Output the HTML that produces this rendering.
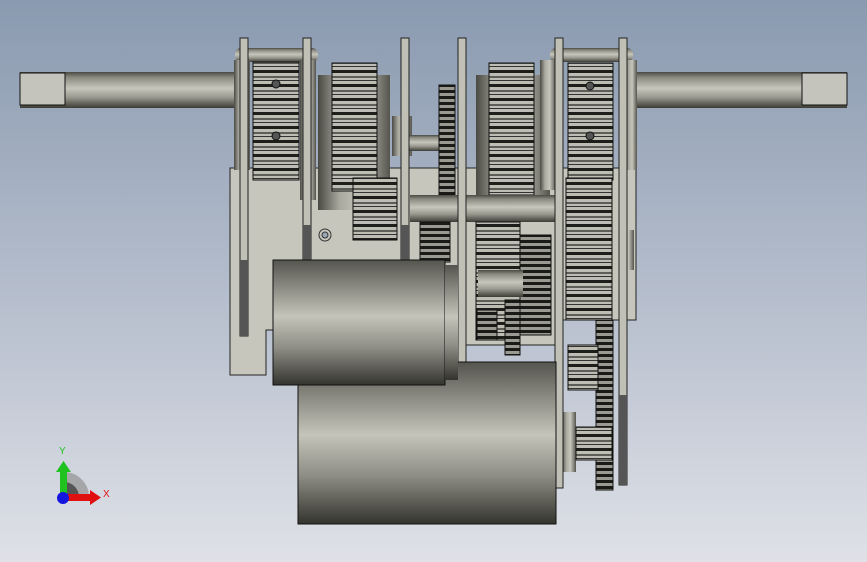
<!DOCTYPE html>
<html><head><meta charset="utf-8"><style>
html,body{margin:0;padding:0;width:867px;height:562px;overflow:hidden}
svg{display:block}
</style></head><body>
<svg width="867" height="562" viewBox="0 0 867 562" xmlns="http://www.w3.org/2000/svg">
<defs>
<linearGradient id="bg" x1="0" y1="0" x2="0" y2="1">
<stop offset="0" stop-color="#8a9ab0"/><stop offset="0.5" stop-color="#b3bccb"/><stop offset="1" stop-color="#dfe1e7"/></linearGradient>
<linearGradient id="cyl" x1="0" y1="0" x2="0" y2="1">
<stop offset="0" stop-color="#4a4a44"/><stop offset="0.15" stop-color="#8a8a80"/><stop offset="0.45" stop-color="#c6c6bc"/><stop offset="0.7" stop-color="#9a9a90"/><stop offset="1" stop-color="#3c3c36"/></linearGradient>
<linearGradient id="cylh" x1="0" y1="0" x2="1" y2="0">
<stop offset="0" stop-color="#4a4a44"/><stop offset="0.3" stop-color="#a8a89e"/><stop offset="0.6" stop-color="#c6c6bc"/><stop offset="1" stop-color="#55554e"/></linearGradient>
<linearGradient id="mot" x1="0" y1="0" x2="0" y2="1">
<stop offset="0" stop-color="#55554f"/><stop offset="0.45" stop-color="#c4c4ba"/><stop offset="0.7" stop-color="#8e8e86"/><stop offset="1" stop-color="#34342e"/></linearGradient>
<pattern id="teeth" width="10" height="14" patternUnits="userSpaceOnUse">
<rect width="10" height="14" fill="#bdbdb3"/><rect y="0" width="10" height="3" fill="#1e1e1a"/><rect y="6" width="10" height="2" fill="#5e5e58"/><rect y="10" width="10" height="1" fill="#333"/></pattern>
<pattern id="teeth2" width="10" height="6" patternUnits="userSpaceOnUse">
<rect width="10" height="6" fill="#9a9a92"/><rect y="0" width="10" height="3" fill="#1a1a16"/></pattern>
</defs>
<rect width="867" height="562" fill="url(#bg)"/>

<rect x="20" y="72" width="225" height="36" fill="url(#cyl)"/>
<rect x="20" y="73" width="45" height="32" fill="#c4c4bc" stroke="#111" stroke-width="1"/>
<rect x="625" y="72" width="222" height="36" fill="url(#cyl)"/>
<rect x="802" y="73" width="45" height="32" fill="#c4c4bc" stroke="#111" stroke-width="1"/>

<path d="M230 168 H636 V320 H560 V345 H460 V330 H266 V375 H230 Z" fill="#c6c6bc" stroke="#222" stroke-width="1"/>

<rect x="235" y="48" width="83" height="14" rx="6" fill="url(#cyl)"/>
<rect x="550" y="48" width="83" height="14" rx="6" fill="url(#cyl)"/>

<rect x="234" y="60" width="16" height="110" fill="url(#cylh)"/>
<rect x="300" y="60" width="16" height="140" fill="url(#cylh)"/>
<rect x="253" y="62" width="46" height="118" fill="url(#teeth)" stroke="#111"/>
<circle cx="276" cy="84" r="4" fill="#555" stroke="#111"/>
<circle cx="276" cy="136" r="4" fill="#555" stroke="#111"/>
<rect x="240" y="38" width="8" height="298" fill="#c0c0b6" stroke="#222"/>
<rect x="240" y="260" width="8" height="76" fill="#555"/>
<rect x="303" y="38" width="8" height="222" fill="#c0c0b6" stroke="#222"/>
<rect x="303" y="225" width="8" height="35" fill="#555"/>

<rect x="318" y="75" width="72" height="135" fill="url(#cylh)"/>
<rect x="332" y="63" width="45" height="128" fill="url(#teeth)" stroke="#111"/>
<rect x="353" y="178" width="44" height="62" fill="url(#teeth)" stroke="#111"/>
<circle cx="325" cy="235" r="6" fill="none" stroke="#333"/><circle cx="325" cy="235" r="3" fill="#9aa6b8" stroke="#333"/>

<rect x="392" y="116" width="20" height="40" fill="url(#cylh)"/>
<rect x="409" y="135" width="32" height="16" fill="url(#cyl)"/>
<rect x="439" y="85" width="16" height="110" fill="url(#teeth2)" stroke="#111"/>
<rect x="401" y="38" width="8" height="222" fill="#c0c0b6" stroke="#222"/>
<rect x="401" y="225" width="8" height="35" fill="#555"/>
<rect x="476" y="75" width="74" height="120" fill="url(#cylh)"/>
<rect x="489" y="63" width="45" height="132" fill="url(#teeth)" stroke="#111"/>
<rect x="410" y="195" width="145" height="27" fill="url(#cyl)"/>
<rect x="420" y="222" width="30" height="40" fill="url(#teeth2)" stroke="#111"/>
<rect x="476" y="222" width="44" height="118" fill="url(#teeth)" stroke="#111"/>
<rect x="520" y="235" width="31" height="100" fill="url(#teeth2)" stroke="#111"/>
<rect x="478" y="270" width="45" height="27" fill="url(#cyl)"/>
<rect x="477" y="310" width="20" height="30" fill="url(#teeth2)" stroke="#111"/>
<rect x="505" y="300" width="15" height="55" fill="url(#teeth2)" stroke="#111"/>
<rect x="458" y="38" width="8" height="372" fill="#c0c0b6" stroke="#222"/>

<rect x="540" y="60" width="16" height="130" fill="url(#cylh)"/>
<rect x="625" y="60" width="12" height="110" fill="url(#cylh)"/>
<rect x="568" y="63" width="45" height="117" fill="url(#teeth)" stroke="#111"/>
<circle cx="590" cy="86" r="4" fill="#555" stroke="#111"/>
<circle cx="590" cy="136" r="4" fill="#555" stroke="#111"/>
<rect x="566" y="178" width="46" height="142" fill="url(#teeth)" stroke="#111"/>
<rect x="620" y="230" width="14" height="40" fill="url(#cylh)"/>
<rect x="596" y="320" width="17" height="170" fill="url(#teeth2)" stroke="#111"/>
<rect x="568" y="345" width="30" height="45" fill="url(#teeth)" stroke="#111"/>
<rect x="562" y="412" width="14" height="60" fill="url(#cylh)"/>
<rect x="576" y="427" width="36" height="33" fill="url(#teeth)" stroke="#111"/>
<rect x="555" y="38" width="8" height="450" fill="#c0c0b6" stroke="#222"/>
<rect x="619" y="38" width="8" height="447" fill="#c0c0b6" stroke="#222"/>
<rect x="619" y="395" width="8" height="90" fill="#555"/>

<rect x="298" y="362" width="258" height="162" fill="url(#mot)" stroke="#111"/>
<rect x="273" y="260" width="172" height="125" fill="url(#mot)" stroke="#111"/>
<rect x="445" y="265" width="13" height="115" fill="url(#mot)"/>

<path d="M64 497 L64 472 A25 25 0 0 1 89 497 Z" fill="#9a9a9a" opacity="0.8"/>
<path d="M64 497 L64 482 A15 15 0 0 1 79 497 Z" fill="#555"/>
<rect x="60" y="470" width="7" height="27" fill="#1fc21f"/>
<path d="M56 472 L63.5 461 L71 472 Z" fill="#1fc21f"/>
<rect x="64" y="494" width="28" height="7" fill="#e01010"/>
<path d="M90 490 L101 497.5 L90 505 Z" fill="#e01010"/>
<circle cx="63" cy="498" r="6" fill="#1515e0"/>
<text x="59" y="454" font-family="Liberation Sans, sans-serif" font-size="10" fill="#1fc21f">Y</text>
<text x="103" y="497" font-family="Liberation Sans, sans-serif" font-size="10" fill="#e01010">X</text>
</svg>
</body></html>
